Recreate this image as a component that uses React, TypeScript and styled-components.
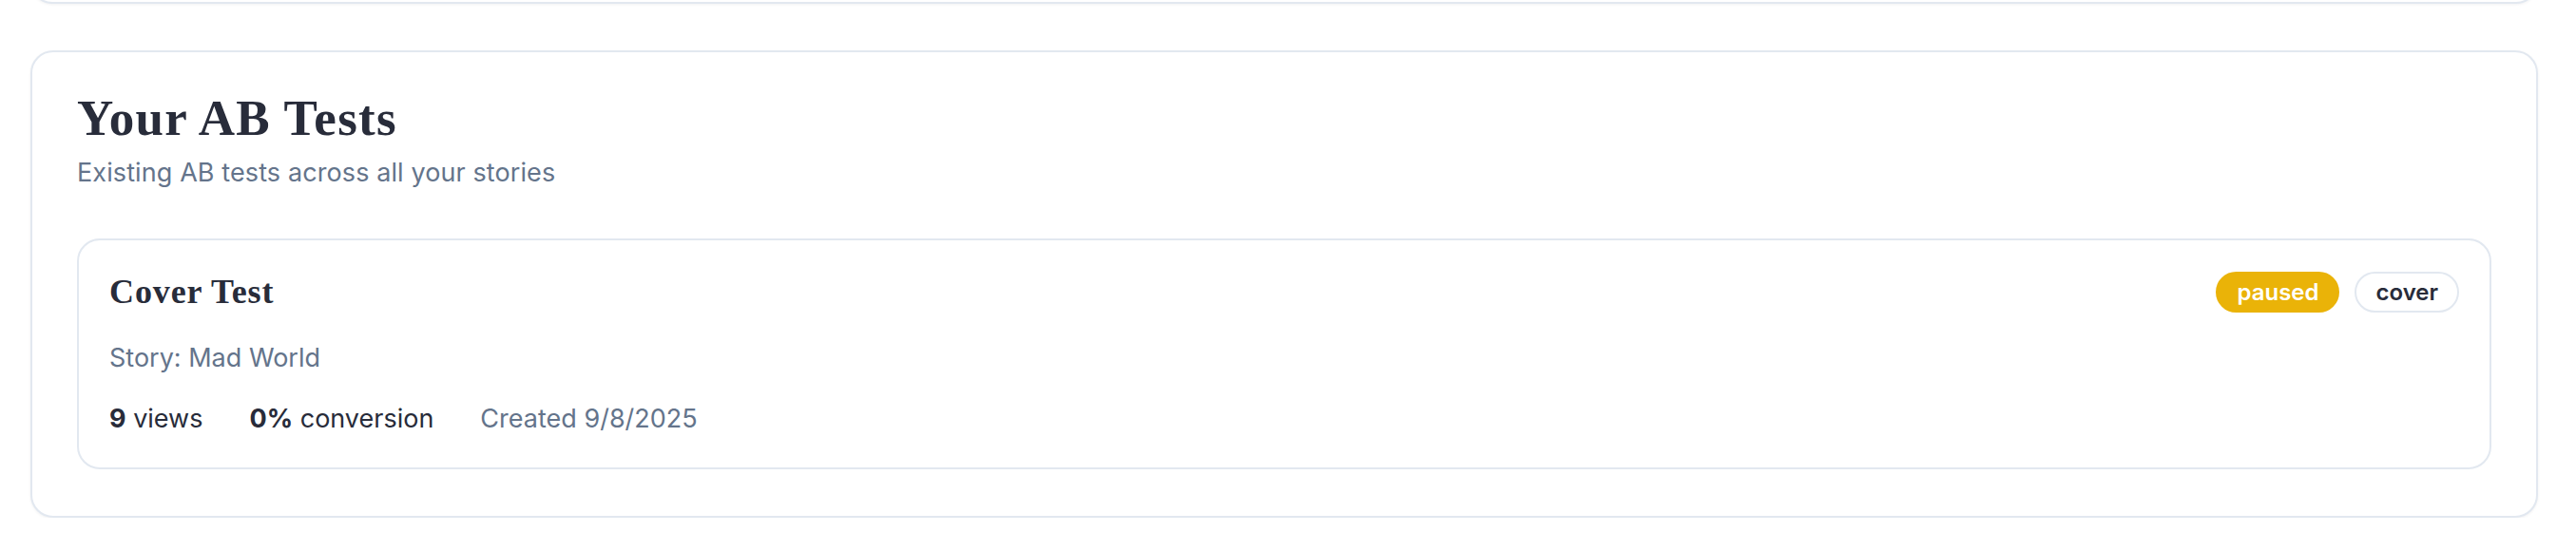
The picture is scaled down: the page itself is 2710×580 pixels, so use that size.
import React from 'react';
import styled, { createGlobalStyle } from 'styled-components';

const GlobalStyle = createGlobalStyle`
  html, body {
    margin: 0;
    padding: 0;
    background: #ffffff;
  }
  body {
    font-family: Inter, "Noto Sans", sans-serif;
    color: #282c3a;
  }
`;

const Page = styled.div`
  display: flex;
  flex-direction: column;
  gap: 49px;
  padding: 0 40px 0 32px;
  overflow: hidden;
`;

const Card = styled.section`
  background: #ffffff;
  border: 2px solid #e2e8f0;
  border-radius: 24px;
  box-shadow: 0 1px 3px rgba(15, 23, 42, 0.06);
`;

// card above, scrolled mostly out of view
const PrevCard = styled(Card)`
  height: 42px;
  margin-top: -42px;
`;

const Panel = styled(Card)`
  padding: 39px 47px 49px 47px;
`;

const Heading = styled.h2`
  margin: 0;
  font-family: "Liberation Serif", "Times New Roman", serif;
  font-weight: 700;
  font-size: 53px;
  line-height: 60px;
  letter-spacing: 1.3px;
  color: #282c3a;
`;

const Subtitle = styled.p`
  margin: 8px 0 0;
  font-size: 27px;
  line-height: 40px;
  letter-spacing: 0.1px;
  color: #64748b;
`;

const TestList = styled.div`
  display: flex;
  flex-direction: column;
  gap: 24px;
  margin-top: 49px;
`;

const TestCard = styled.article`
  border: 2px solid #e2e8f0;
  border-radius: 24px;
  padding: 33px 32px 31px 32px;
  background: #ffffff;
`;

const TestHeader = styled.div`
  display: flex;
  align-items: center;
  justify-content: space-between;
`;

const TestTitle = styled.h3`
  margin: 0;
  font-family: "Liberation Serif", "Times New Roman", serif;
  font-weight: 700;
  font-size: 36px;
  line-height: 43px;
  letter-spacing: 0.9px;
  color: #282c3a;
`;

const Badges = styled.div`
  display: flex;
  align-items: center;
  gap: 16px;
`;

const Badge = styled.span<{ $variant: 'warning' | 'outline' }>`
  box-sizing: border-box;
  display: inline-flex;
  align-items: center;
  justify-content: center;
  height: 43px;
  padding: 0 20px;
  border-radius: 999px;
  font-size: 24px;
  font-weight: 600;
  line-height: 1;
  background: ${(p) => (p.$variant === 'warning' ? '#eab308' : '#ffffff')};
  color: ${(p) => (p.$variant === 'warning' ? '#ffffff' : '#282c3a')};
  border: 2px solid ${(p) => (p.$variant === 'warning' ? '#eab308' : '#e2e8f0')};
`;

const StoryLine = styled.p`
  margin: 28px 0 0;
  font-size: 27px;
  line-height: 40px;
  color: #64748b;
`;

const Stats = styled.div`
  display: flex;
  align-items: baseline;
  gap: 49px;
  margin-top: 24px;
  font-size: 27px;
  line-height: 40px;
`;

const Stat = styled.span<{ $muted?: boolean }>`
  color: ${(p) => (p.$muted ? '#64748b' : '#282c3a')};

  & > strong {
    font-weight: 700;
  }
`;

type AbTest = {
  name: string;
  story: string;
  status: string;
  kind: string;
  views: number;
  conversion: number;
  created: string;
};

const tests: AbTest[] = [
  {
    name: 'Cover Test',
    story: 'Mad World',
    status: 'paused',
    kind: 'cover',
    views: 9,
    conversion: 0,
    created: '9/8/2025',
  },
];

const App = () => {
  return (
    <>
      <GlobalStyle />
      <Page>
        <PrevCard />
        <Panel>
          <Heading>Your AB Tests</Heading>
          <Subtitle>Existing AB tests across all your stories</Subtitle>
          <TestList>
            {tests.map((t) => (
              <TestCard key={t.name}>
                <TestHeader>
                  <TestTitle>{t.name}</TestTitle>
                  <Badges>
                    <Badge $variant="warning">{t.status}</Badge>
                    <Badge $variant="outline">{t.kind}</Badge>
                  </Badges>
                </TestHeader>
                <StoryLine>Story: {t.story}</StoryLine>
                <Stats>
                  <Stat>
                    <strong>{t.views}</strong> views
                  </Stat>
                  <Stat>
                    <strong>{t.conversion}%</strong> conversion
                  </Stat>
                  <Stat $muted>Created {t.created}</Stat>
                </Stats>
              </TestCard>
            ))}
          </TestList>
        </Panel>
      </Page>
    </>
  );
};

export default App;
